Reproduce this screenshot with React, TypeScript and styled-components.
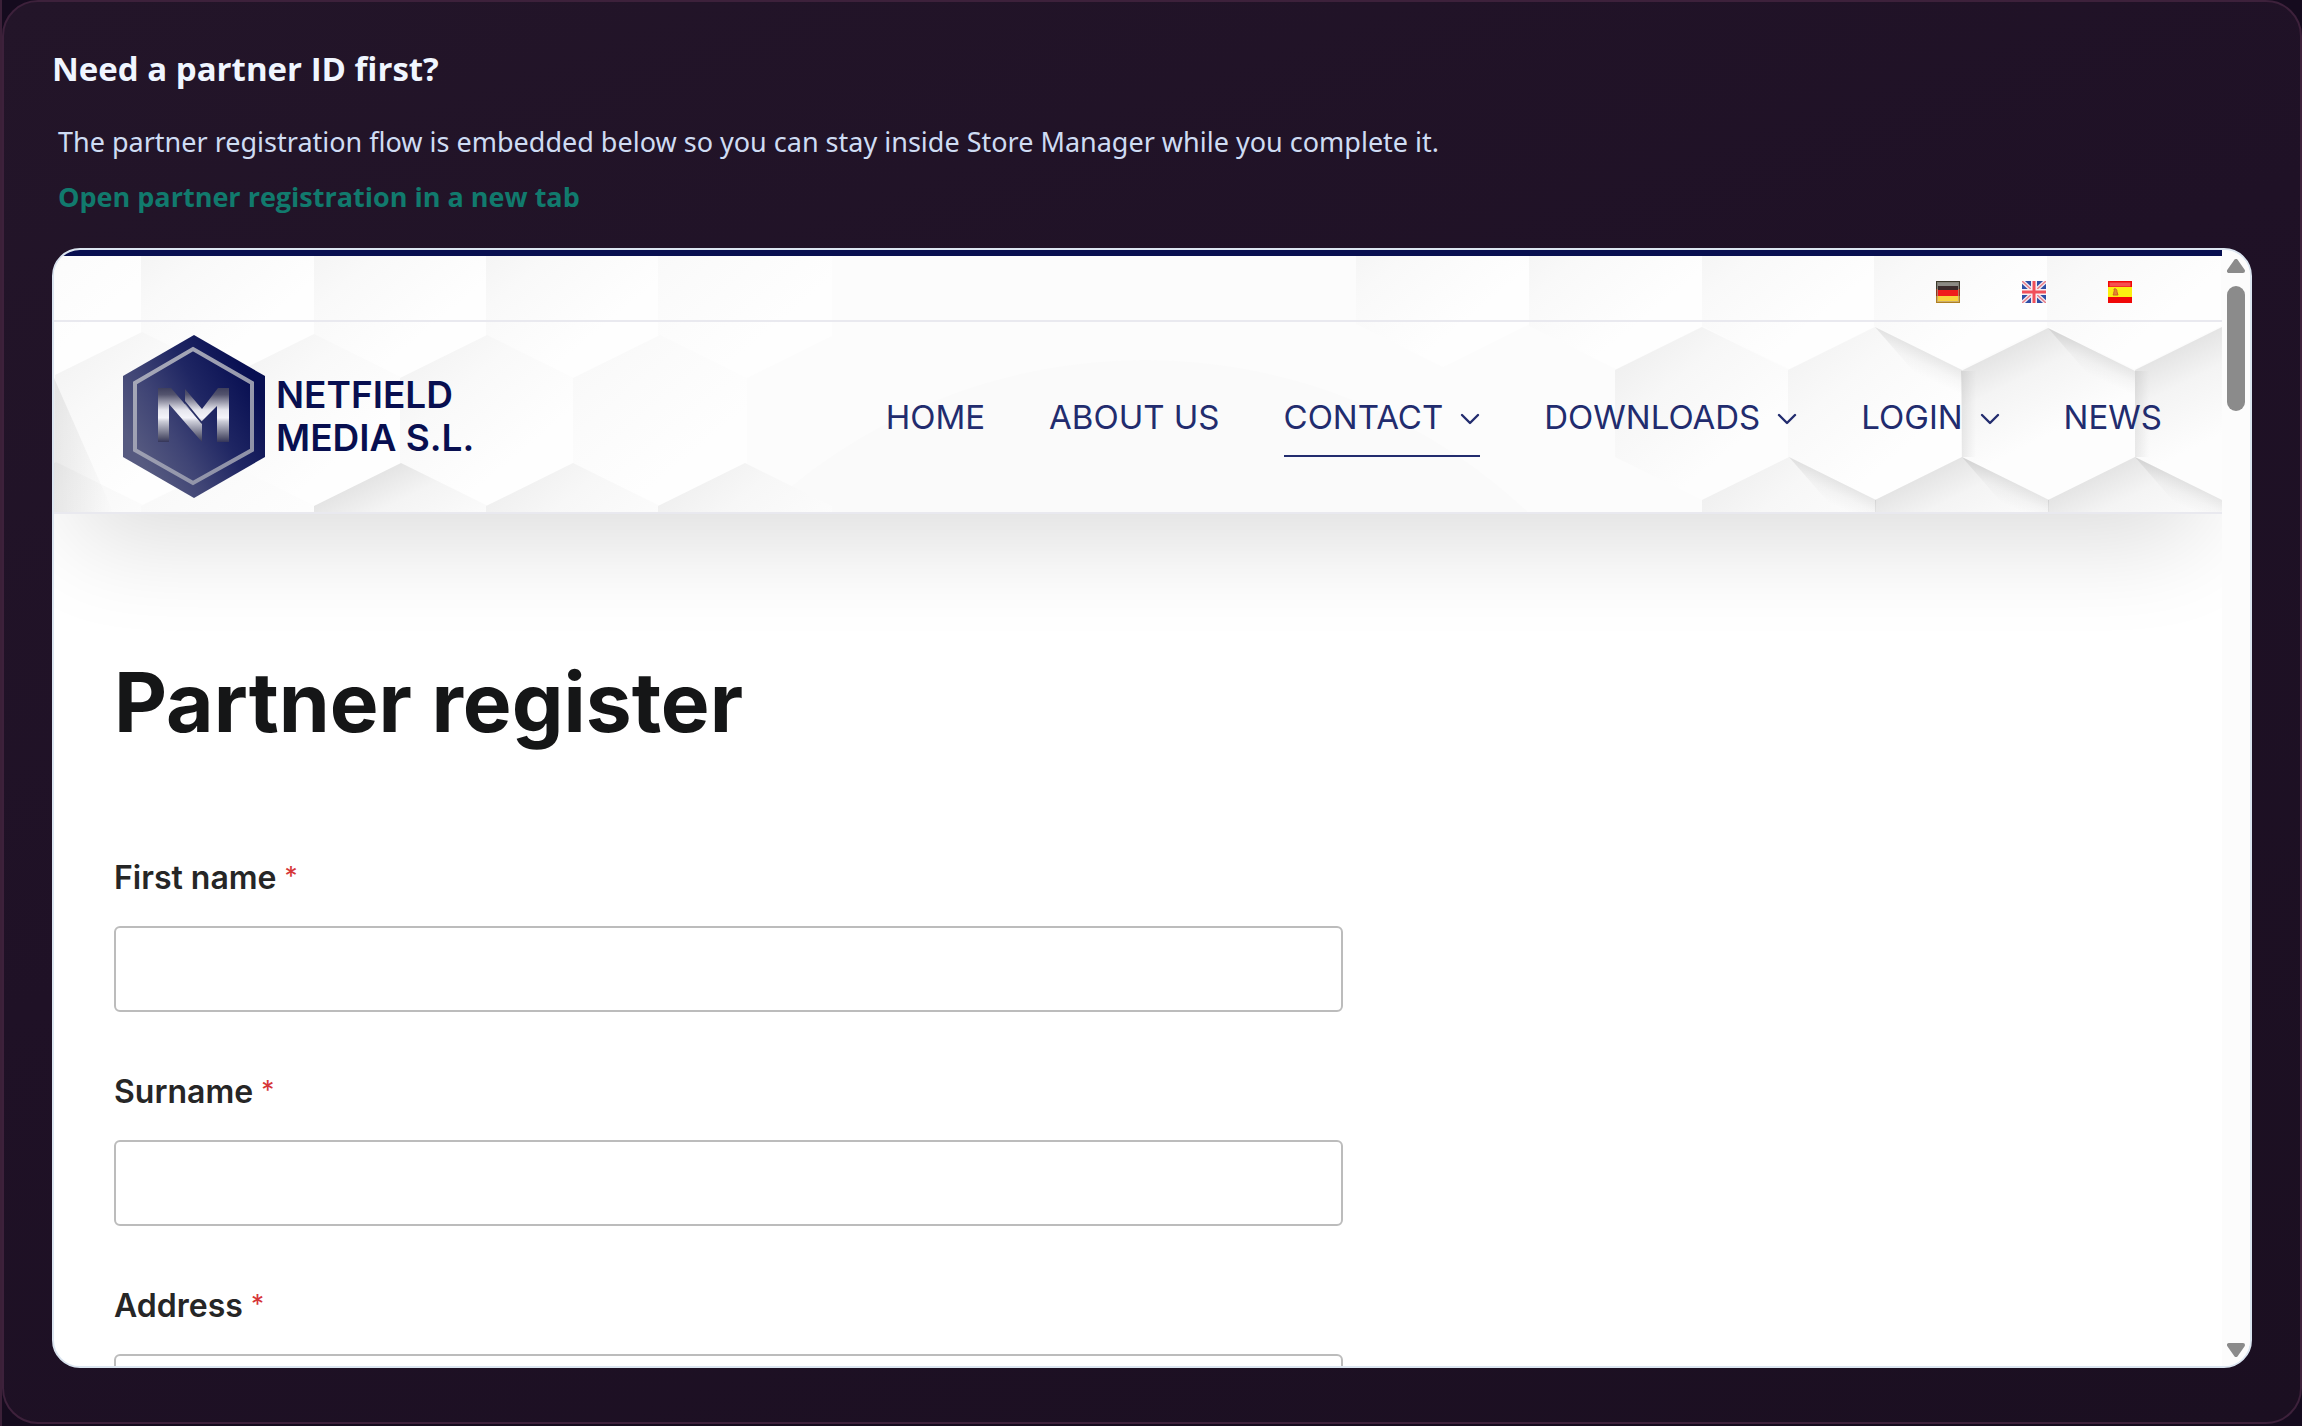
import React from "react";
import styled, { createGlobalStyle } from "styled-components";

const GlobalStyle = createGlobalStyle`
  *, *::before, *::after { box-sizing: border-box; }
  html, body { margin: 0; background: #150b1e; }
  body { font-family: "Open Sans", "Noto Sans", sans-serif; }
  h1, h2, p { margin: 0; }
`;

const Shell = styled.main`
  min-height: 100vh;
  padding-bottom: 2px;
  border-left: 2px solid #3b2038;
`;

const Card = styled.section`
  padding: 45px 48px 54px;
  border: 2px solid #3d213b;
  border-radius: 36px;
  background: linear-gradient(160deg, #231529 0%, #1f1126 45%, #1b0f21 100%);
`;

const CardTitle = styled.h2`
  color: #f0f6ff;
  font-size: 33px;
  line-height: 44px;
  font-weight: 700;
`;

const CardText = styled.p`
  margin-top: 26px;
  padding-left: 6px;
  color: #cfdcf3;
  font-family: "Noto Sans", "Open Sans", sans-serif;
  font-size: 27px;
  line-height: 50px;
`;

const CardLink = styled.a`
  display: table;
  margin: 5px 0 26px 6px;
  color: #117a6d;
  font-size: 27px;
  line-height: 50px;
  font-weight: 700;
  text-decoration: none;
`;

const Frame = styled.div`
  display: flex;
  height: 1120px;
  overflow: hidden;
  border: 2px solid #dbe5f0;
  border-radius: 28px;
  background: #fff;
`;

const Page = styled.div`
  flex: 1;
  min-width: 0;
  overflow: hidden;
  font-family: Inter, "Liberation Sans", sans-serif;
`;

const Header = styled.header`
  position: relative;
  border-top: 6px solid #080f50;
  background: #fcfcfc;
  box-shadow: 0 50px 100px -24px rgba(0, 0, 0, 0.14);
`;

const Pattern = styled.svg`
  position: absolute;
  inset: 0;
  width: 100%;
  height: 100%;
`;

const TopBar = styled.div`
  position: relative;
  display: flex;
  justify-content: flex-end;
  align-items: center;
  gap: 62px;
  height: 66px;
  padding: 8px 90px 0 0;
  border-bottom: 2px solid #e9e9ef;
`;

const FlagLink = styled.a`
  display: block;
  height: 22px;
  svg { display: block; }
`;

const NavBar = styled.div`
  position: relative;
  display: flex;
  justify-content: space-between;
  align-items: center;
  height: 192px;
  padding: 0 60px 0 69px;
  border-bottom: 2px solid #e9e9ef;
`;

const Brand = styled.a`
  display: flex;
  align-items: center;
  gap: 11px;
  color: #080f50;
  text-decoration: none;
`;

const BrandName = styled.span`
  padding-bottom: 2px;
  font-size: 37px;
  line-height: 43px;
  font-weight: 600;
`;

const Nav = styled.nav`
  display: flex;
  gap: 64px;
`;

const NavLink = styled.a<{ $active?: boolean }>`
  display: flex;
  align-items: center;
  gap: 17px;
  height: 80px;
  padding-top: 2px;
  border-bottom: 2px solid ${(p) => (p.$active ? "#222c6e" : "transparent")};
  color: #222c6e;
  font-size: 33px;
  line-height: 40px;
  text-decoration: none;
  white-space: nowrap;
  svg { margin-top: 4px; }
`;

const Content = styled.div`
  position: relative;
  padding: 149px 60px 0;
`;

const PageTitle = styled.h1`
  color: #151617;
  font-size: 82px;
  line-height: 80px;
  font-weight: 700;
`;

const Form = styled.form`
  display: grid;
  gap: 60px;
  margin-top: 115px;
`;

const Field = styled.div`
  display: grid;
  gap: 28px;
`;

const Label = styled.label`
  color: #262626;
  font-size: 32px;
  line-height: 40px;
  font-weight: 600;
`;

const Required = styled.span`
  color: #d63638;
  font-size: 26px;
  line-height: 0;
  font-weight: 400;
  vertical-align: 4px;
`;

const TextInput = styled.input`
  width: 60%;
  height: 86px;
  padding: 0 24px;
  border: 2px solid #bcbcbc;
  border-radius: 6px;
  background: #fff;
  color: #262626;
  font: inherit;
  font-size: 32px;
`;

const Scrollbar = styled.div`
  display: flex;
  flex-direction: column;
  align-items: center;
  width: 28px;
  padding: 9px 0;
  background: #fcfcfc;
`;

const ScrollButton = styled.button`
  width: 18px;
  height: 14px;
  padding: 0;
  border: 0;
  background: none;
  svg { display: block; }
`;

const Track = styled.div`
  flex: 1;
  padding-top: 13px;
`;

const Thumb = styled.div`
  width: 18px;
  height: 125px;
  border-radius: 9px;
  background: #8b8b8b;
`;

type Tone = "faint" | "soft" | "mid" | "deep";

/* A hexagonal tile given by the centre of its top vertex. */
function Tile({ x, y, tone }: { x: number; y: number; tone: Tone }) {
  const points = [
    [x, y], [x + 87, y + 43], [x + 87, y + 130],
    [x, y + 173], [x - 87, y + 130], [x - 87, y + 43],
  ];
  return <polygon points={points.map((p) => p.join(",")).join(" ")} fill={`url(#tile-${tone})`} />;
}

/* The crease that darkens a tile under its upper right edge. */
function Fold({ x, y }: { x: number; y: number }) {
  return <polygon transform={`translate(${x} ${y})`} points="0,0 87,43 87,100" fill="url(#fold)" />;
}

const tones: [Tone, string, string, string][] = [
  ["faint", "#f9f9f9", "#fbfbfb", "#fefefe"],
  ["soft", "#f4f4f4", "#f9f9f9", "#fefefe"],
  ["mid", "#f0f0f0", "#f7f7f7", "#fdfdfd"],
  ["deep", "#e4e4e4", "#f4f4f4", "#fdfdfd"],
];

const tiles: [number, number, Tone][] = [
  [2, -50, "faint"], [174, -50, "soft"], [347, -50, "soft"], [519, -50, "soft"], [691, -50, "faint"],
  [1389, -62, "soft"], [1562, -60, "soft"], [1735, -60, "soft"], [1907, -60, "soft"], [2080, -60, "soft"],
  [88, 76, "soft"], [260, 78, "soft"], [433, 79, "soft"], [606, 79, "faint"],
  [1648, 71, "mid"], [1821, 71, "soft"], [1994, 72, "deep"], [2168, 71, "deep"],
  [2, 206, "mid"], [174, 207, "faint"], [347, 207, "deep"], [519, 207, "mid"], [691, 207, "mid"],
  [1735, 201, "mid"], [1908, 201, "deep"], [2081, 201, "deep"],
];

const folds: [number, number][] = [[1821, 71], [1994, 72], [1735, 201], [1908, 201], [2081, 201]];

function HexPattern() {
  return (
    <Pattern viewBox="0 0 2168 258" preserveAspectRatio="xMidYMin slice" aria-hidden="true">
      <defs>
        {tones.map(([name, from, mid, to]) => (
          <linearGradient
            key={name}
            id={`tile-${name}`}
            x1={name === "deep" ? 0.25 : 0.15}
            y1="0.12"
            x2={name === "deep" ? 0.5 : 0.65}
            y2={name === "deep" ? 0.62 : 0.72}
          >
            <stop offset="0" stopColor={from} />
            <stop offset="0.35" stopColor={mid} />
            <stop offset="1" stopColor={to} />
          </linearGradient>
        ))}
        <linearGradient id="fold" gradientUnits="userSpaceOnUse" x1="50" y1="25" x2="40" y2="46">
          <stop offset="0" stopColor="#000" stopOpacity="0.08" />
          <stop offset="0.5" stopColor="#000" stopOpacity="0.025" />
          <stop offset="1" stopColor="#000" stopOpacity="0" />
        </linearGradient>
        <linearGradient id="edge">
          <stop offset="0" stopColor="#000" stopOpacity="0.07" />
          <stop offset="1" stopColor="#000" stopOpacity="0" />
        </linearGradient>
      </defs>
      <circle cx="1091" cy="662" r="558" fill="#fafafa" />
      {tiles.map(([x, y, tone]) => <Tile key={`${x}-${y}`} x={x} y={y} tone={tone} />)}
      {folds.map(([x, y]) => <Fold key={`${x}-${y}`} x={x} y={y} />)}
      <polygon points="0,122 60,258 0,258" fill="url(#edge)" />
      <rect x="1908" y="115" width="14" height="86" fill="url(#edge)" />
      <rect x="2081" y="115" width="14" height="86" fill="url(#edge)" />
    </Pattern>
  );
}

function LogoMark() {
  return (
    <svg width="142" height="164" viewBox="0 0 142 164" aria-hidden="true">
      <defs>
        <linearGradient id="badge" gradientUnits="userSpaceOnUse" x1="12" y1="115" x2="130" y2="48">
          <stop offset="0" stopColor="#565a80" />
          <stop offset="0.3" stopColor="#3f4475" />
          <stop offset="0.62" stopColor="#1f2663" />
          <stop offset="1" stopColor="#080f52" />
        </linearGradient>
        <linearGradient id="steel" gradientUnits="userSpaceOnUse" x1="0" y1="52" x2="0" y2="107">
          <stop offset="0" stopColor="#3b3c5a" />
          <stop offset="0.14" stopColor="#54546e" />
          <stop offset="0.42" stopColor="#e6e6ee" />
          <stop offset="0.56" stopColor="#f4f4fa" />
          <stop offset="0.62" stopColor="#cdced9" />
          <stop offset="0.92" stopColor="#55566f" />
          <stop offset="1" stopColor="#34355a" />
        </linearGradient>
        <linearGradient id="rim" x1="0" y1="0" x2="1" y2="1">
          <stop offset="0" stopColor="#a9abba" />
          <stop offset="1" stopColor="#8b8ea5" />
        </linearGradient>
      </defs>
      <polygon points="71,0 142,41 142,122 71,163 0,122 0,41" fill="url(#badge)" />
      <polygon points="70,14 129,48 129,115 70,148 12,115 12,48" fill="none" stroke="url(#rim)" strokeWidth="4" />
      <polygon points="35,53 48,53 79,89 79,107 46,69 46,107 35,107" fill="url(#steel)" />
      <polygon points="62,54 79,74 95,53 106,53 106,107 94,107 94,71 78,87 62,69" fill="url(#steel)" />
      <path d="M61 66L79 88" stroke="#262c62" strokeWidth="1.5" />
    </svg>
  );
}

function Chevron() {
  return (
    <svg width="20" height="12" viewBox="0 0 20 12" fill="none" aria-hidden="true">
      <path d="M2 2l8 8 8-8" stroke="#222c6e" strokeWidth="2.4" strokeLinecap="round" strokeLinejoin="round" />
    </svg>
  );
}

function GermanFlag() {
  return (
    <svg width="24" height="22" viewBox="0 0 24 22" aria-hidden="true">
      <rect width="24" height="8" fill="#3c3a2c" />
      <rect y="8" width="24" height="7" fill="#8c3a1c" />
      <rect y="15" width="24" height="7" fill="#b08020" />
      <rect x="2" y="2" width="20" height="3" fill="#8b8b84" />
      <rect x="2" y="5" width="20" height="4" fill="#3a2a2a" />
      <rect x="2" y="9" width="20" height="6" fill="#f01c1c" />
      <rect x="2" y="15" width="20" height="5" fill="#f8d23c" />
      <rect x="1.5" y="1.5" width="21" height="19" fill="none" stroke="#fff" strokeOpacity="0.35" />
    </svg>
  );
}

function BritishFlag() {
  return (
    <svg width="24" height="22" viewBox="0 0 24 22" aria-hidden="true">
      <rect width="24" height="22" fill="#2f4fa5" />
      <path d="M0 0l24 22M24 0L0 22" stroke="#f3eef6" strokeWidth="4" />
      <path d="M0 0l24 22M24 0L0 22" stroke="#e8808a" strokeWidth="1.5" />
      <path d="M12 0v22M0 11h24" stroke="#f6eef2" strokeWidth="6" />
      <path d="M12 0v22M0 11h24" stroke="#f0505a" strokeWidth="3" />
    </svg>
  );
}

function SpanishFlag() {
  return (
    <svg width="24" height="22" viewBox="0 0 24 22" aria-hidden="true">
      <rect width="24" height="22" fill="#f00808" />
      <rect x="1.5" y="1.5" width="21" height="4" fill="#f65050" />
      <rect y="6" width="24" height="10" fill="#fbf010" />
      <path d="M6 8c3-1 3 2 3 3l1 3H5l1-2c-1-1 1-1 0-4z" fill="#e08a30" stroke="#d05a28" />
    </svg>
  );
}

function Triangle({ down }: { down?: boolean }) {
  return (
    <svg width="18" height="14" viewBox="0 0 18 14" aria-hidden="true">
      <path
        d={down ? "M2 2h14L9 12z" : "M2 12h14L9 2z"}
        fill="#8b8b8b"
        stroke="#8b8b8b"
        strokeWidth="4"
        strokeLinejoin="round"
      />
    </svg>
  );
}

const languages = [
  { name: "Deutsch", flag: <GermanFlag /> },
  { name: "English", flag: <BritishFlag /> },
  { name: "Español", flag: <SpanishFlag /> },
];

const links = [
  { label: "HOME" },
  { label: "ABOUT US" },
  { label: "CONTACT", menu: true, active: true },
  { label: "DOWNLOADS", menu: true },
  { label: "LOGIN", menu: true },
  { label: "NEWS" },
];

const fields = [
  { id: "first-name", label: "First name" },
  { id: "surname", label: "Surname" },
  { id: "address", label: "Address" },
];

export default function App() {
  return (
    <>
      <GlobalStyle />
      <Shell>
        <Card>
          <CardTitle>Need a partner ID first?</CardTitle>
          <CardText>
            The partner registration flow is embedded below so you can stay inside Store Manager while you complete it.
          </CardText>
          <CardLink href="#register">Open partner registration in a new tab</CardLink>
          <Frame>
            <Page>
              <Header>
                <HexPattern />
                <TopBar>
                  {languages.map((l) => (
                    <FlagLink key={l.name} href="#language" aria-label={l.name}>{l.flag}</FlagLink>
                  ))}
                </TopBar>
                <NavBar>
                  <Brand href="#home">
                    <LogoMark />
                    <BrandName>NETFIELD<br />MEDIA S.L.</BrandName>
                  </Brand>
                  <Nav>
                    {links.map((l) => (
                      <NavLink key={l.label} href="#nav" $active={l.active}>
                        {l.label}
                        {l.menu && <Chevron />}
                      </NavLink>
                    ))}
                  </Nav>
                </NavBar>
              </Header>
              <Content id="register">
                <PageTitle>Partner register</PageTitle>
                <Form>
                  {fields.map((f) => (
                    <Field key={f.id}>
                      <Label htmlFor={f.id}>
                        {f.label} <Required>*</Required>
                      </Label>
                      <TextInput id={f.id} type="text" required />
                    </Field>
                  ))}
                </Form>
              </Content>
            </Page>
            <Scrollbar>
              <ScrollButton type="button" aria-label="Scroll up"><Triangle /></ScrollButton>
              <Track><Thumb /></Track>
              <ScrollButton type="button" aria-label="Scroll down"><Triangle down /></ScrollButton>
            </Scrollbar>
          </Frame>
        </Card>
      </Shell>
    </>
  );
}
